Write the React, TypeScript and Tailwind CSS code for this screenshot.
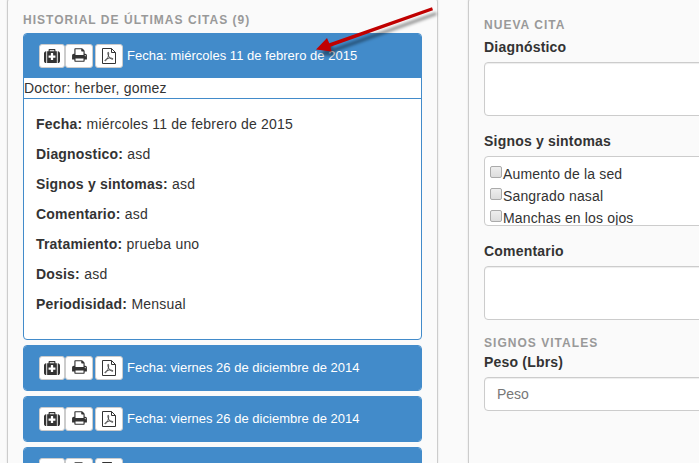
import type { ReactNode } from "react";

function MedkitIcon() {
  return (
    <svg className="-mt-px h-[14px] w-4 shrink-0" viewBox="0 128 1792 1536" preserveAspectRatio="none" fill="currentColor">
      <path d="M1280 1056v-192q0-14-9-23t-23-9h-224V608q0-14-9-23t-23-9H800q-14 0-23 9t-9 23v224H544q-14 0-23 9t-9 23v192q0 14 9 23t23 9h224v224q0 14 9 23t23 9h192q14 0 23-9t9-23v-224h224q14 0 23-9t9-23zM640 384h512V256H640v128zM256 384v1280h-32q-92 0-158-66T0 1440V608q0-92 66-158t158-66h32zm1184 0v1280H352V384h160V224q0-40 28-68t68-28h576q40 0 68 28t28 68v160h160zm352 224v832q0 92-66 158t-158 66h-32V384h32q92 0 158 66t66 158z" />
    </svg>
  );
}

function PrintIcon() {
  return (
    <svg className="-mt-[2px] h-4 w-[15px] shrink-0" viewBox="0 0 1664 1792" fill="currentColor">
      <path d="M384 1536h896v-256H384v256zm0-640h896V512h-160q-40 0-68-28t-28-68V256H384v640zm1152 64q0-26-19-45t-45-19-45 19-19 45 19 45 45 19 45-19 19-45zm128 0v416q0 13-9.500 22.500t-22.500 9.500h-224v160q0 40-28 68t-68 28H352q-40 0-68-28t-28-68v-160H32q-13 0-22.500-9.500T0 1376V960q0-79 56.500-135.500T192 768h64V224q0-40 28-68t68-28h672q40 0 88 20t76 48l152 152q28 28 48 76t20 88v256h64q79 0 135.500 56.500T1664 960z" />
    </svg>
  );
}

function PdfIcon() {
  return (
    <svg className="h-4 w-[14px] shrink-0" viewBox="0 0 14 16" fill="none" stroke="currentColor">
      <path d="M.5.5H9.500L13.500 4.500V15.500H.5ZM9.500.5V4.500H13.500" />
      <path strokeWidth=".8" d="M6.300 4.200C5.300 4 5.800 7.200 7.300 9.100C8.300 10.500 9.800 11.500 10.900 11.200C11.600 10.600 9.600 9.800 7.300 10.100C5 10.400 3.100 11.400 2.900 12.700C3.300 13.800 5.100 11.500 6 9.100C6.700 7.200 7 4.600 6.300 4.200Z" />
    </svg>
  );
}

function IconButton({ children }: { children: ReactNode }) {
  return (
    <button className="flex h-6 items-center justify-center rounded-[3px] border border-[#ccc] bg-white text-[#333]">
      {children}
    </button>
  );
}

function Actions() {
  return (
    <div className="grid grid-cols-[26px_29px_29px]">
      <IconButton><MedkitIcon /></IconButton>
      <div className="mr-px grid"><IconButton><PrintIcon /></IconButton></div>
      <div className="ml-px grid"><IconButton><PdfIcon /></IconButton></div>
    </div>
  );
}

function VisitHeader({ date }: { date: string }) {
  return (
    <div className="flex h-11 items-center bg-[#428bca] pl-[15px] text-[13px] leading-[18px] text-white">
      <Actions />
      <span className="ml-1 tracking-[0.015px] whitespace-nowrap">Fecha: {date}</span>
    </div>
  );
}

const details = [
  ["Fecha:", "miércoles 11 de febrero de 2015"],
  ["Diagnostico:", "asd"],
  ["Signos y sintomas:", "asd"],
  ["Comentario:", "asd"],
  ["Tratamiento:", "prueba uno"],
  ["Dosis:", "asd"],
  ["Periodisidad:", "Mensual"],
];

const symptoms = ["Aumento de la sed", "Sangrado nasal", "Manchas en los ojos"];

function SectionTitle({ children }: { children: ReactNode }) {
  return <h2 className="text-[12px] leading-[18px] font-bold tracking-[1.030px] whitespace-nowrap text-[#999]">{children}</h2>;
}

function Label({ children }: { children: ReactNode }) {
  return <label className="block text-[14px] leading-5 font-bold tracking-[0.2px] whitespace-nowrap">{children}</label>;
}

function Panel({ children }: { children: ReactNode }) {
  return <section className="shrink-0 overflow-hidden rounded border border-[#428bca] bg-white">{children}</section>;
}

export default function App() {
  return (
    <div className="relative flex h-[463px] w-[699px] overflow-hidden bg-[#fafafa] font-['Liberation_Sans',Arial,sans-serif] text-[14px] leading-5 text-[#333]">
      <main className="-mt-[2px] ml-[7px] flex w-[431px] shrink-0 flex-col rounded-t border border-b-0 border-[#ccc] px-[15px] pt-3 shadow-[0_0_2px_rgba(0,0,0,0.12)]">
        <SectionTitle>HISTORIAL DE ÚLTIMAS CITAS (9)</SectionTitle>
        <div className="mt-1 flex flex-col gap-[5px]">
          <Panel>
            <VisitHeader date="miércoles 11 de febrero de 2015" />
            <div className="h-[21px] border-b border-[#428bca] tracking-[0.2px]">Doctor: herber, gomez</div>
            <dl className="flex h-[240px] flex-col gap-[10px] px-3 pt-[15px]">
              {details.map(([name, value]) => (
                <div key={name} className="flex gap-[4.300px] tracking-[0.19px] whitespace-nowrap">
                  <dt className="font-bold">{name}</dt>
                  <dd>{value}</dd>
                </div>
              ))}
            </dl>
          </Panel>
          <Panel><VisitHeader date="viernes 26 de diciembre de 2014" /></Panel>
          <Panel><VisitHeader date="viernes 26 de diciembre de 2014" /></Panel>
          <Panel>
            <div className="flex h-11 bg-[#428bca] pt-[10px] pl-[15px]">
              <Actions />
            </div>
          </Panel>
        </div>
      </main>

      <aside className="-mt-[2px] ml-[30px] flex w-[300px] shrink-0 flex-col rounded-tl border-t border-l border-[#ccc] pt-[17px] pl-[15px] shadow-[0_0_2px_rgba(0,0,0,0.12)]">
        <SectionTitle>NUEVA CITA</SectionTitle>
        <div className="mt-[3px]"><Label>Diagnóstico</Label></div>
        <div className="mt-[5px] h-[54px] shrink-0 rounded border border-[#ccc] bg-white shadow-[inset_0_1px_1px_rgba(0,0,0,0.075)]" />
        <div className="mt-[15px]"><Label>Signos y sintomas</Label></div>
        <div className="mt-[5px] h-[70px] shrink-0 overflow-hidden rounded border border-[#ccc] bg-white pt-[7px] pl-[5px]">
          {symptoms.map((name) => (
            <div key={name} className="flex h-[22px] tracking-[0.15px] whitespace-nowrap">
              <span className="mt-[2px] mr-px h-3 w-3 rounded-[2px] border border-[#aaa] bg-linear-to-b from-[#eee] to-[#ddd]" />
              <span>{name}</span>
            </div>
          ))}
        </div>
        <div className="mt-[15px]"><Label>Comentario</Label></div>
        <div className="mt-[5px] h-[54px] shrink-0 rounded border border-[#ccc] bg-white shadow-[inset_0_1px_1px_rgba(0,0,0,0.075)]" />
        <div className="mt-[14px]"><SectionTitle>SIGNOS VITALES</SectionTitle></div>
        <Label>Peso (Lbrs)</Label>
        <div className="mt-[5px] flex h-[34px] shrink-0 items-center rounded border border-[#ccc] bg-white pl-3 text-[#777] shadow-[inset_0_1px_1px_rgba(0,0,0,0.075)]">Peso</div>
      </aside>

      <svg className="absolute top-0 left-[310px] h-[65px] w-[135px]" viewBox="310 0 135 65">
        <defs>
          <filter id="soft" x="-20%" y="-20%" width="140%" height="150%"><feGaussianBlur stdDeviation="1.500" /></filter>
        </defs>
        <path d="M432 7L433 10L330 47L331 51L316 50L327 38L329 43.500Z" transform="translate(4 5)" fill="#000" fillOpacity=".4" filter="url(#soft)" />
        <path d="M432 7.300L433 10.200L330.500 46.800L331.500 51.500L316 49.500L327 38L329.300 43.200Z" fill="#c00000" />
      </svg>
    </div>
  );
}
